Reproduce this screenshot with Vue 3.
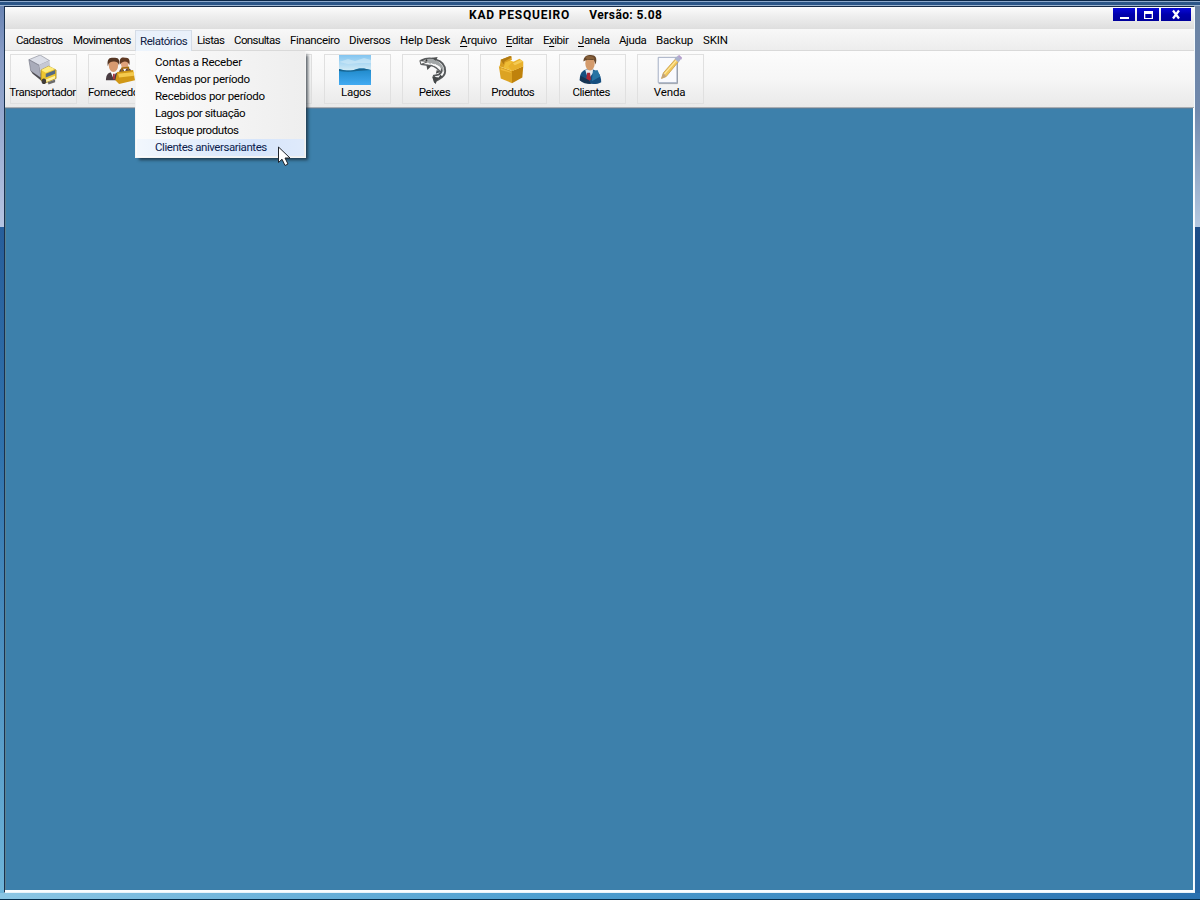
<template>
  <div class="desktop">
    <div class="window">
      <header class="title-bar">
        <h1>KAD PESQUEIRO<span>Versão: 5.08</span></h1>
        <div class="window-buttons">
          <button type="button" class="win-btn" aria-label="Minimizar">
            <svg width="22" height="13" viewBox="0 0 22 13">
              <path d="M7 9h9v2H7z" fill="#fff" />
            </svg>
          </button>
          <button type="button" class="win-btn" aria-label="Maximizar">
            <svg width="22" height="13" viewBox="0 0 22 13">
              <path d="M7 3h9v8H7zM8.300 6v4h6.400V6z" fill="#fff" fill-rule="evenodd" />
            </svg>
          </button>
          <button type="button" class="win-btn close" aria-label="Fechar">
            <svg width="30" height="13" viewBox="0 0 30 13">
              <path d="M12 2.500l6 8M18 2.500l-6 8" stroke="#fff" stroke-width="2.200" />
            </svg>
          </button>
        </div>
      </header>

      <nav class="menu-bar">
        <div
          v-for="item in menus"
          :key="item.name"
          class="menu-item"
          :class="{ open: item.name === openMenu }"
        >
          <span class="menu-label" :style="{ letterSpacing: item.track + 'px' }">{{ item.pre }}<u v-if="item.key">{{ item.key }}</u>{{ item.post }}</span>
          <ul v-if="item.name === openMenu" class="dropdown">
            <li
              v-for="report in reports"
              :key="report.name"
              :class="{ hover: report.name === hovered }"
              :style="{ letterSpacing: report.track + 'px' }"
            >
              {{ report.name }}
            </li>
          </ul>
        </div>
      </nav>

      <div class="toolbar">
        <button v-for="tool in tools" :key="tool.icon" type="button" class="tool">
          <!-- caminhão -->
          <svg v-if="tool.icon === 'truck'" class="icon" viewBox="0 0 32 32">
            <path d="M2 5L14 0l10 6-11 5z" fill="#dcdfe8" stroke="#8a8c98" stroke-width=".7" />
            <path d="M2 5l11 6 2 14L4 17z" fill="#a9acba" stroke="#777986" stroke-width=".7" />
            <path d="M13 11l11-5 1 8-9 10z" fill="#c5c8d4" />
            <path d="M4 17l12 8v3L6 20z" fill="#4c4b50" />
            <path d="M15 16l8-4 8 4v9l-12 5-4-3z" fill="#eec62f" stroke="#98790f" stroke-width=".7" />
            <path d="M15 16l8-4 7 3-10 4z" fill="#ffec7b" />
            <path d="M20 20l10-4v4l-10 4z" fill="#546a84" />
            <path d="M20 26l10-4v3l-10 4z" fill="#fff3a6" />
            <ellipse cx="18" cy="28" rx="2.400" ry="3" fill="#3f3b38" />
            <path d="M22 29l8-3v3l-7 2.500z" fill="#6b6b6b" />
          </svg>
          <!-- duas pessoas com maleta -->
          <svg v-else-if="tool.icon === 'suppliers'" class="icon" viewBox="0 0 32 32">
            <path d="M1 27c0-7 3-9 8-9 4 0 6 3 6 9z" fill="#493c42" />
            <path d="M6 18l3 7 3-7z" fill="#fff" />
            <path d="M8.500 20h2v6h-2z" fill="#ad3740" />
            <ellipse cx="9" cy="11" rx="5" ry="7" fill="#d79a70" />
            <path d="M3 12C2 5 4 2 9 3c6-1 7 3 6 8-1-3-3-4-5-4-4 0-6 1-7 5z" fill="#563623" />
            <path d="M15 18c1-4 4-5 8-4 4 0 6 2 6 7H15z" fill="#594248" />
            <path d="M19 14l2 4 2-4z" fill="#fff" />
            <ellipse cx="21" cy="9" rx="4" ry="6" fill="#e0a27b" />
            <path d="M16 10c-1-6 1-8 5-7 5-1 6 3 5 8-1-4-6-6-10-1z" fill="#603922" />
            <path d="M13 18l17-2 2 11-17 4-4-4z" fill="#d19816" />
            <path d="M14 20l17-2v4l-16 2z" fill="#f5ca4d" />
            <path d="M18 17v-3l7-1v3" fill="none" stroke="#a46d0c" stroke-width="1.500" />
          </svg>
          <!-- lago -->
          <svg v-else-if="tool.icon === 'lake'" class="icon wide" viewBox="0 0 32 30" preserveAspectRatio="none">
            <defs>
              <linearGradient id="sky" x1="0" y1="0" x2="0" y2="1">
                <stop offset="0" stop-color="#83c5f0" />
                <stop offset=".5" stop-color="#cfe9f5" />
              </linearGradient>
              <linearGradient id="water" x1="0" y1="0" x2="0" y2="1">
                <stop offset="0" stop-color="#1e88c8" />
                <stop offset="1" stop-color="#42aaf2" />
              </linearGradient>
            </defs>
            <path d="M0 0h32v30H0z" fill="url(#sky)" />
            <path d="M0 7l9-3 7 2 9-3 7 2v3L20 8 9 9z" fill="#dceffa" opacity=".5" />
            <path d="M0 14c8 2 12 2 18 0 6-1 9 0 14 1v15H0z" fill="url(#water)" />
            <path d="M0 14c8 2 12 2 18 0 6-1 9 0 14 1l-14 1c-6 1-12 1-18 0z" fill="#17638f" />
          </svg>
          <!-- peixe -->
          <svg v-else-if="tool.icon === 'fish'" class="icon" viewBox="0 0 32 32">
            <path d="M3 6c6-3 11-3 16-1 7 2 10 7 10 12 0 4-3 7-7 9l-4 2-1-6 5-1c3-2 4-5 3-8" fill="none" stroke="#55585a" stroke-width="2" />
            <path d="M3 10l8 1c5 0 8 2 11 5l3 3" fill="none" stroke="#5c5f61" stroke-width="1.500" />
            <path d="M2 6l9 1-8 3z" fill="#fff" stroke="#4b4d4d" />
            <path d="M7 5c6-2 12-1 17 4 3 3 4 6 3 9-2-6-8-9-15-9z" fill="#a2a6a7" />
            <path d="M15 3l6-1-2 4zM9 11l1 5 4-4M20 16l-1 4 5-2z" fill="#4c4e4f" />
            <path d="M15 23l7 1 2-3 2 2-6 4-1 4-2-2z" fill="#434647" />
            <circle cx="9" cy="5.500" r="1" fill="#333" />
            <path d="M14 9l3 2M18 10l3 2M22 12l2 3" stroke="#fff" />
          </svg>
          <!-- caixa -->
          <svg v-else-if="tool.icon === 'box'" class="icon" viewBox="0 0 32 32">
            <path d="M2 12l14 5v13L4 25z" fill="#dca322" />
            <path d="M16 17l12-5-1 12-11 6z" fill="#bf820c" />
            <path d="M2 12l11-7 15 7-12 5z" fill="#efbd35" />
            <path d="M3 12L4 5l11-4 1 4-7 3-2 5z" fill="#d89d20" />
            <path d="M4 5l10-4 2 1-8 5-1 3z" fill="#b27b13" />
            <path d="M16 8l8-4 4 3v5l-12 5-4-5z" fill="#e8b02b" />
            <path d="M17 9l8-4 3 2-9 4z" fill="#f4cb55" />
            <path d="M4 14l11 4v1L4 16z" fill="#f0bb3b" />
          </svg>
          <!-- cliente -->
          <svg v-else-if="tool.icon === 'client'" class="icon" viewBox="0 0 32 32">
            <path d="M5 27c0-8 3-11 9-12 9 0 14 5 14 14-5 3-13 3-23-2z" fill="#164f80" />
            <path d="M11 16l3 10 6-8-2-4z" fill="#e5eaf0" />
            <path d="M13 19h3l1 7-3 3-2-4z" fill="#aa2634" />
            <path d="M5 27l1-5 9 5 2 4c-5 0-9-1-12-4z" fill="#173453" />
            <path d="M19 17l5-1 3 7-9 5z" fill="#2874a4" />
            <ellipse cx="16" cy="9" rx="5" ry="7.500" fill="#d49b6c" />
            <path d="M9 7c0-5 3-7 8-7s7 3 5 10l-2-5c-4 1-7-1-11 2z" fill="#67472b" />
            <path d="M11 2c4-2 9-1 10 2l-8 1z" fill="#88613b" />
          </svg>
          <!-- papel e lápis -->
          <svg v-else-if="tool.icon === 'sale'" class="icon" viewBox="0 0 32 32">
            <path d="M4.500 2.500h20v27h-20z" fill="#f9fafe" stroke="#9faabf" />
            <path d="M5 30.500h20v-27" fill="none" stroke="#78818e" stroke-width=".7" />
            <path d="M8 25l2-6L24 3l3 3-14 17z" fill="#f1c75a" stroke="#c3984a" stroke-width=".8" />
            <path d="M10.500 21L25 4.500" stroke="#ffe9a2" stroke-width="1.200" />
            <path d="M8 25l2-6 3 4z" fill="#c3a47c" />
            <path d="M22 4l3-3 4 3-3 4z" fill="#aab2cf" />
            <path d="M25 1l2-1 3 3-1 2z" fill="#b4a0cc" />
          </svg>
          <span v-else class="icon"></span>
          <span class="tool-label" :style="{ letterSpacing: tool.track + 'px' }">{{ tool.title }}</span>
        </button>
      </div>

      <main class="workspace"></main>
    </div>

    <svg class="cursor" width="14" height="21" viewBox="0 0 14 21">
      <path
        d="M1.500 1v15.500l3.500-3.300L8 19.500l3-1.500-3-6h5z"
        fill="#fff"
        stroke="#20242b"
        stroke-width="1"
      />
    </svg>
  </div>
</template>

<script setup>
import { ref } from "vue";

const openMenu = ref("Relatórios");
const hovered = ref("Clientes aniversariantes");

// key - letra sublinhada do atalho, track - espaço entre letras
const menus = [
  { name: "Cadastros", pre: "Cadastros", track: -0.65 },
  { name: "Movimentos", pre: "Movimentos", track: -0.58 },
  { name: "Relatórios", pre: "Relatórios", track: -0.43 },
  { name: "Listas", pre: "Listas", track: -0.6 },
  { name: "Consultas", pre: "Consultas", track: -0.6 },
  { name: "Financeiro", pre: "Financeiro", track: -0.37 },
  { name: "Diversos", pre: "Diversos", track: -0.36 },
  { name: "Help Desk", pre: "Help Desk", track: -0.2 },
  { name: "Arquivo", key: "A", post: "rquivo", track: -0.33 },
  { name: "Editar", key: "E", post: "ditar", track: -0.45 },
  { name: "Exibir", pre: "E", key: "x", post: "ibir", track: -0.48 },
  { name: "Janela", key: "J", post: "anela", track: -0.43 },
  { name: "Ajuda", pre: "Ajuda", track: -0.4 },
  { name: "Backup", pre: "Backup", track: -0.15 },
  { name: "SKIN", pre: "SKIN", track: -0.1 },
];

const reports = [
  { name: "Contas a Receber", track: -0.2 },
  { name: "Vendas por período", track: -0.27 },
  { name: "Recebidos por período", track: -0.25 },
  { name: "Lagos por situação", track: -0.43 },
  { name: "Estoque produtos", track: -0.42 },
  { name: "Clientes aniversariantes", track: -0.44 },
];

const tools = [
  { icon: "truck", title: "Transportador", track: -0.5 },
  { icon: "suppliers", title: "Fornecedores", track: -0.35 },
  { icon: "empty1", title: "" },
  { icon: "empty2", title: "" },
  { icon: "lake", title: "Lagos", track: -0.3 },
  { icon: "fish", title: "Peixes", track: -0.35 },
  { icon: "box", title: "Produtos", track: -0.45 },
  { icon: "client", title: "Clientes", track: -0.5 },
  { icon: "sale", title: "Venda", track: -0.1 },
];
</script>

<style>
body {
  margin: 0;
  overflow: hidden;
}
</style>

<style scoped>
.desktop {
  position: relative;
  box-sizing: border-box;
  width: 1200px;
  height: 900px;
  padding: 6px 5px 7px 4px;
  font-family: Roboto, "Liberation Sans", sans-serif;
  font-size: 11.5px;
  color: #000;
  background:
    linear-gradient(#0c2747 0 1px, #8ea9cb 1px 2px, #2b5587 2px 5px, #9bb4d0 5px 6px) top / 100% 6px no-repeat,
    linear-gradient(#0000 6px, #052d4c 6px) bottom / 100% 7px no-repeat,
    linear-gradient(90deg, #8cc6e4, #4e9fd0 45%, #2a71b0) bottom / 100% 7px no-repeat,
    linear-gradient(#6580b0, #8499c4 50px, #b5c4e2 227px, #275e9b 227px, #2f72ad 450px, #70b6da 900px) left / 4px 100% no-repeat,
    linear-gradient(#6a82a2, #7089ad 110px, #b4c8e0 227px, #1c4d88 227px, #2868a5 900px) right / 5px 100% no-repeat;
}
.window {
  display: flex;
  flex-direction: column;
  box-sizing: border-box;
  height: 100%;
  border-top: 1px solid #162b48;
  border-left: 1px solid #18314f;
  border-right: 1px solid #f2f9fd;
  border-bottom: 1px solid #e9f3fa;
  background-color: #fafdff;
}
.title-bar {
  display: grid;
  grid-template-columns: 1fr auto;
  height: 22px;
  flex: none;
  background: linear-gradient(#fcfcfc, #f0f0f0 35%, #dedede);
}
.title-bar h1 {
  margin: 0;
  padding-left: 464px;
  font-size: 12px;
  font-weight: 700;
  line-height: 16px;
  letter-spacing: 0.8px;
  white-space: pre;
}
.title-bar span {
  margin-left: 19px;
  letter-spacing: 0.4px;
}
.window-buttons {
  display: flex;
  gap: 2px;
  padding: 1px 3px 0 0;
}
.win-btn {
  display: flex;
  width: 22px;
  height: 13px;
  padding: 0;
  border: 0;
  background: linear-gradient(#0808d8, #0000ad 50%, #00009b);
}
.win-btn.close {
  width: 30px;
}
.menu-bar {
  display: grid;
  grid-template-columns: 57px 67px 57px 37px 56px 59px 51px 60px 46px 37px 35px 41px 37px 47px 35px;
  flex: none;
  height: 21px;
  padding-left: 6px;
  border-bottom: 1px solid #d9d9d9;
  background: linear-gradient(#f8f8f8, #ededed);
}
.menu-item {
  position: relative;
  box-sizing: border-box;
  height: 21px;
  padding-left: 5px;
  line-height: 22px;
  white-space: nowrap;
}
.menu-item.open {
  margin-top: 1px;
  border: 1px solid #d5dce6;
  border-bottom: 0;
  padding-left: 4px;
  color: #101c44;
  line-height: 20px;
  background: linear-gradient(#e9f0fa, #edf4fc);
  z-index: 2;
}
.menu-item u {
  text-underline-offset: 2px;
}
.dropdown {
  position: absolute;
  top: 20px;
  left: -1px;
  box-sizing: border-box;
  width: 171px;
  margin: 0;
  padding: 3px 1px 1px;
  list-style: none;
  background: linear-gradient(90deg, #fbfbfb, #eeeeee);
  border: 1px solid #f4f4f4;
  border-top: 0;
  color: #000;
  box-shadow: 3px 3px 3px -1px rgba(20, 30, 40, 0.7);
}
.dropdown li {
  height: 17px;
  padding-left: 18px;
  line-height: 17px;
}
.dropdown li.hover {
  color: #0b1b4d;
  background: linear-gradient(90deg, #f2f7fd, #d6e5fb 70%, #dfeafb);
}
.toolbar {
  display: flex;
  flex: none;
  gap: 11.4px;
  box-sizing: border-box;
  height: 57px;
  padding: 3px 0 0 5px;
  border-bottom: 1px solid #a9adb2;
  background: linear-gradient(#fcfcfc, #f6f6f6 50%, #e9e9e9);
}
.tool {
  display: flex;
  flex-direction: column;
  align-items: center;
  flex: none;
  box-sizing: border-box;
  width: 67px;
  height: 50px;
  padding: 0;
  border: 1px solid #e0e0e0;
  background: none;
  font: inherit;
  color: #000;
}
.icon {
  display: block;
  width: 30px;
  height: 30px;
  margin-right: 4px;
}
.icon.wide {
  width: 32px;
}
.tool-label {
  margin-right: 2px;
  line-height: 15px;
  white-space: nowrap;
}
.workspace {
  flex: 1;
  margin: 0 1px 2px 0;
  border-top: 1px solid #557e9d;
  border-left: 1px solid #5b8190;
  background-color: #3d80ab;
}
.cursor {
  position: absolute;
  top: 146px;
  left: 277px;
  z-index: 3;
}
</style>
